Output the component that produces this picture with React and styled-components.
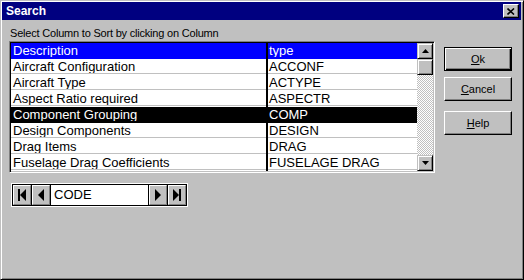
import React from "react";
import styled, { createGlobalStyle } from "styled-components";

const Global = createGlobalStyle`
  body {
    margin: 0;
    background: #c0c0c0;
    font-family: "Liberation Sans", Arial, sans-serif;
  }
`;

const Window = styled.div`
  width: 524px;
  height: 280px;
  box-sizing: border-box;
  background: #c0c0c0;
  border: 1px solid;
  border-color: #c0c0c0 #000 #000 #c0c0c0;
  box-shadow: inset 1px 1px #fff, inset -1px -1px #808080;
  padding: 1px 2px 2px 1px;
  display: flex;
  flex-direction: column;
`;

const TitleBar = styled.div`
  height: 18px;
  background: #000080;
  display: flex;
  align-items: center;
  justify-content: space-between;
  padding: 0 2px 0 4px;
`;

const Title = styled.span`
  color: #fff;
  font-weight: bold;
  font-size: 12px;
  line-height: 14px;
`;

const CloseButton = styled.div`
  width: 16px;
  height: 14px;
  box-sizing: border-box;
  background: #c0c0c0;
  border: 1px solid;
  border-color: #fff #000 #000 #fff;
  box-shadow: inset -1px -1px #808080;
  display: flex;
  align-items: center;
  justify-content: center;
`;

const Body = styled.div`
  display: flex;
  padding: 0 0 0 7px;
  gap: 9px;
`;

const LeftPane = styled.div`
  display: flex;
  flex-direction: column;
`;

const Label = styled.div`
  font-size: 11px;
  line-height: 13px;
  letter-spacing: -0.2px;
  margin: 7px 0 1px 1px;
  color: #000;
`;

const Grid = styled.div`
  width: 426px;
  height: 132px;
  box-sizing: border-box;
  border: 1px solid;
  border-color: #808080 #fff #fff #808080;
  box-shadow: inset 1px 1px #000, inset -1px -1px #c0c0c0;
  padding: 1px;
  display: flex;
`;

const Rows = styled.div`
  width: 406px;
  background: #fff;
  display: flex;
  flex-direction: column;
`;

const Row = styled.div`
  display: flex;
  height: 16px;
  background: ${(p) => p.bg || "#fff"};
  color: ${(p) => (p.bg ? "#fff" : "#000")};
`;

const Cell = styled.div`
  width: ${(p) => p.w}px;
  height: 15px;
  box-sizing: border-box;
  padding-left: ${(p) => p.pad}px;
  border-bottom: 1px solid ${(p) => (p.bg ? p.bg : "#c0c0c0")};
  font-family: "Liberation Sans Narrow", "Liberation Sans", Arial, sans-serif;
  font-size: 13px;
  line-height: 15px;
  white-space: nowrap;
  overflow: hidden;
`;

const Divider = styled.div`
  width: 2px;
  height: 16px;
  background: #000;
`;

const Scrollbar = styled.div`
  width: 16px;
  display: flex;
  flex-direction: column;
`;

const ScrollButton = styled.div`
  width: 16px;
  height: 16px;
  box-sizing: border-box;
  background: #c0c0c0;
  border: 1px solid;
  border-color: #c0c0c0 #000 #000 #c0c0c0;
  box-shadow: inset 1px 1px #fff, inset -1px -1px #808080;
  display: flex;
  align-items: center;
  justify-content: center;
`;

const Track = styled.div`
  flex: 1;
  background-color: #c0c0c0;
  background-image: repeating-conic-gradient(#fff 0 25%, #c0c0c0 0 50%);
  background-size: 2px 2px;
`;

const Navigator = styled.div`
  margin: 10px 0 0 2px;
  width: 177px;
  box-sizing: border-box;
  border: 1px solid #fff;
  display: flex;
`;

const NavInner = styled.div`
  flex: 1;
  border: 1px solid #000;
  display: flex;
  height: 20px;
  background: #000;
  gap: 1px;
`;

const NavButton = styled.div`
  width: 18px;
  box-sizing: border-box;
  background: #c0c0c0;
  border: 1px solid;
  border-color: #fff #808080 #808080 #fff;
  display: flex;
  align-items: center;
  justify-content: center;
`;

const NavField = styled.div`
  width: 97px;
  background: #fff;
  font-family: "Liberation Sans Narrow", "Liberation Sans", Arial, sans-serif;
  font-size: 13px;
  line-height: 20px;
  padding-left: 3px;
  box-sizing: border-box;
`;

const RightPane = styled.div`
  display: flex;
  flex-direction: column;
  padding-top: 27px;
`;

const Button = styled.div`
  width: 68px;
  height: 24px;
  margin-bottom: ${(p) => p.mb || 0}px;
  box-sizing: border-box;
  background: #c0c0c0;
  border: 1px solid;
  border-color: ${(p) => (p.primary ? "#000" : "#fff #000 #000 #fff")};
  box-shadow: ${(p) =>
    p.primary
      ? "inset 1px 1px #fff, inset -1px -1px #000, inset -2px -2px #808080"
      : "inset -1px -1px #808080"};
  font-size: 11px;
  display: flex;
  align-items: center;
  justify-content: center;
  color: #000;
`;

const Key = styled.span`
  text-decoration: underline;
`;

const rows = [
  ["Description", "type", "#0000ff"],
  ["Aircraft Configuration", "ACCONF"],
  ["Aircraft Type", "ACTYPE"],
  ["Aspect Ratio required", "ASPECTR"],
  ["Component Grouping", "COMP", "#000"],
  ["Design Components", "DESIGN"],
  ["Drag Items", "DRAG"],
  ["Fuselage Drag Coefficients", "FUSELAGE DRAG"],
];

const Arrow = ({ dir }) => (
  <svg width="7" height="4" viewBox="0 0 7 4">
    {dir === "up" ? (
      <polygon points="3.5,0 7,4 0,4" fill="#000" />
    ) : (
      <polygon points="0,0 7,0 3.5,4" fill="#000" />
    )}
  </svg>
);

const NavIcon = ({ kind }) => (
  <svg width="10" height="14" viewBox="0 0 10 14">
    {kind === "first" && (
      <>
        <rect x="1" y="1" width="2" height="12" fill="#000" />
        <polygon points="9,1 9,13 3,7" fill="#000" />
      </>
    )}
    {kind === "prev" && <polygon points="8,1 8,13 2,7" fill="#000" />}
    {kind === "next" && <polygon points="2,1 2,13 8,7" fill="#000" />}
    {kind === "last" && (
      <>
        <polygon points="1,1 1,13 7,7" fill="#000" />
        <rect x="7" y="1" width="2" height="12" fill="#000" />
      </>
    )}
  </svg>
);

export default function App() {
  return (
    <Window>
      <Global />
      <TitleBar>
        <Title>Search</Title>
        <CloseButton>
          <svg width="8" height="7" viewBox="0 0 8 7">
            <path d="M0.5 0.5 L7 6.5 M7 0.5 L0.5 6.5" stroke="#000" strokeWidth="1.6" />
          </svg>
        </CloseButton>
      </TitleBar>
      <Body>
        <LeftPane>
          <Label>Select Column to Sort by clicking on Column</Label>
          <Grid>
            <Rows>
              {rows.map(([desc, type, bg]) => (
                <Row key={desc} bg={bg}>
                  <Cell w={255} pad={2} bg={bg}>
                    {desc}
                  </Cell>
                  <Divider />
                  <Cell w={149} pad={1} bg={bg}>
                    {type}
                  </Cell>
                </Row>
              ))}
            </Rows>
            <Scrollbar>
              <ScrollButton>
                <Arrow dir="up" />
              </ScrollButton>
              <ScrollButton />
              <Track />
              <ScrollButton>
                <Arrow dir="down" />
              </ScrollButton>
            </Scrollbar>
          </Grid>
          <Navigator>
            <NavInner>
              <NavButton>
                <NavIcon kind="first" />
              </NavButton>
              <NavButton>
                <NavIcon kind="prev" />
              </NavButton>
              <NavField>CODE</NavField>
              <NavButton>
                <NavIcon kind="next" />
              </NavButton>
              <NavButton>
                <NavIcon kind="last" />
              </NavButton>
            </NavInner>
          </Navigator>
        </LeftPane>
        <RightPane>
          <Button primary mb={6}>
            <Key>O</Key>k
          </Button>
          <Button mb={10}>
            <Key>C</Key>ancel
          </Button>
          <Button>
            <Key>H</Key>elp
          </Button>
        </RightPane>
      </Body>
    </Window>
  );
}
